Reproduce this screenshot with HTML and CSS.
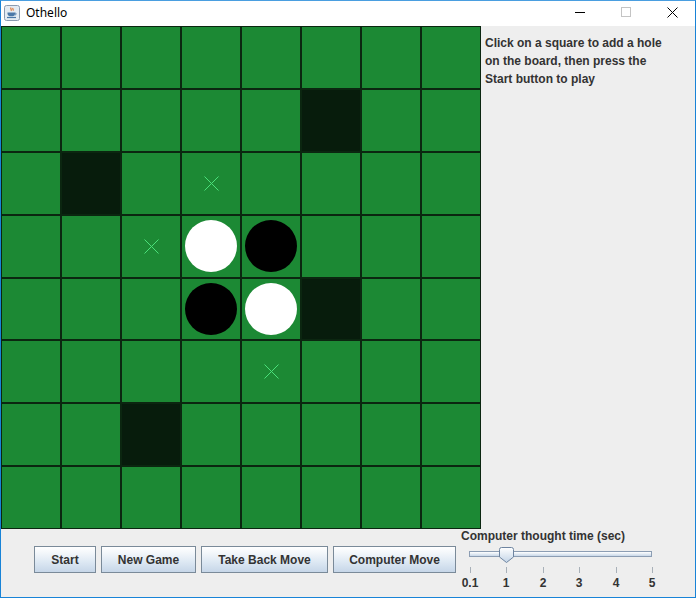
FILE: index.html
```html
<!DOCTYPE html>
<html>
<head>
<meta charset="utf-8">
<title>Othello</title>
<link rel="stylesheet" href="styles.css">
</head>
<body>
<div class="window">
  <div class="titlebar">
    <svg class="app-icon" width="16" height="16" viewBox="0 0 16 16">
      <rect x="0.5" y="0.5" width="15" height="15" rx="2" fill="#e4ebf2" stroke="#8a9bb0"/>
      <path d="M7 2.5c-1 1.2 1 2 0 3.3M9 3c-.8 1 .8 1.6 0 2.6" stroke="#e0702a" stroke-width="1.1" fill="none"/>
      <path d="M3.5 7.5h7.5v1.2c0 1.6-1.4 2.6-3.7 2.6S3.5 10.3 3.5 8.7z" fill="#4a78a8"/>
      <path d="M11 8c1.6 0 1.6 2-0.4 2" stroke="#4a78a8" fill="none"/>
      <path d="M3 12.5h9" stroke="#4a78a8" stroke-width="1.2"/>
    </svg>
    <span class="title">Othello</span>
    <div class="controls">
      <span class="ctl"><svg width="10" height="10" viewBox="0 0 10 10"><path d="M0 5.5h10" stroke="#000" stroke-width="1"/></svg></span>
      <span class="ctl"><svg width="10" height="10" viewBox="0 0 10 10"><rect x="0.5" y="0.5" width="9" height="9" fill="none" stroke="#c4c4c4"/></svg></span>
      <span class="ctl"><svg width="11" height="11" viewBox="0 0 11 11"><path d="M0.5 0.5l10 10M10.5 0.5l-10 10" stroke="#000" stroke-width="1"/></svg></span>
    </div>
  </div>
  <div class="content">
    <div class="board">
      <div class="cell"></div><div class="cell"></div><div class="cell"></div><div class="cell"></div><div class="cell"></div><div class="cell"></div><div class="cell"></div><div class="cell"></div>
      <div class="cell"></div><div class="cell"></div><div class="cell"></div><div class="cell"></div><div class="cell"></div><div class="cell hole"></div><div class="cell"></div><div class="cell"></div>
      <div class="cell"></div><div class="cell hole"></div><div class="cell"></div><div class="cell"><svg class="hint" width="15" height="15" viewBox="0 0 15 15"><path d="M0.5 0.5l14 14M14.5 0.5l-14 14" stroke="#4be07a" stroke-width="1"/></svg></div><div class="cell"></div><div class="cell"></div><div class="cell"></div><div class="cell"></div>
      <div class="cell"></div><div class="cell"></div><div class="cell"><svg class="hint" width="15" height="15" viewBox="0 0 15 15"><path d="M0.5 0.5l14 14M14.5 0.5l-14 14" stroke="#4be07a" stroke-width="1"/></svg></div><div class="cell"><span class="disc white"></span></div><div class="cell"><span class="disc black"></span></div><div class="cell"></div><div class="cell"></div><div class="cell"></div>
      <div class="cell"></div><div class="cell"></div><div class="cell"></div><div class="cell"><span class="disc black"></span></div><div class="cell"><span class="disc white"></span></div><div class="cell hole"></div><div class="cell"></div><div class="cell"></div>
      <div class="cell"></div><div class="cell"></div><div class="cell"></div><div class="cell"></div><div class="cell"><svg class="hint" width="15" height="15" viewBox="0 0 15 15"><path d="M0.5 0.5l14 14M14.5 0.5l-14 14" stroke="#4be07a" stroke-width="1"/></svg></div><div class="cell"></div><div class="cell"></div><div class="cell"></div>
      <div class="cell"></div><div class="cell"></div><div class="cell hole"></div><div class="cell"></div><div class="cell"></div><div class="cell"></div><div class="cell"></div><div class="cell"></div>
      <div class="cell"></div><div class="cell"></div><div class="cell"></div><div class="cell"></div><div class="cell"></div><div class="cell"></div><div class="cell"></div><div class="cell"></div>
    </div>
    <div class="side">
      <p class="info">Click on a square to add a hole<br>on the board, then press the<br>Start button to play</p>
    </div>
  </div>
  <div class="bottom">
    <div class="buttons">
      <button class="btn btn-start">Start</button>
      <button class="btn btn-new">New Game</button>
      <button class="btn btn-back">Take Back Move</button>
      <button class="btn btn-comp">Computer Move</button>
    </div>
    <div class="slider-box">
      <div class="slider-label">Computer thought time (sec)</div>
      <div class="slider">
        <div class="track"></div>
        <svg class="thumb" width="15" height="16" viewBox="0 0 15 16">
          <defs><linearGradient id="tg" x1="0" y1="0" x2="0" y2="1"><stop offset="0" stop-color="#ffffff"/><stop offset="1" stop-color="#c3d4e7"/></linearGradient></defs>
          <path d="M2.5 0.5h10a2 2 0 0 1 2 2v7.5l-7 5.5l-7-5.5v-7.5a2 2 0 0 1 2-2z" fill="url(#tg)" stroke="#6e84a0"/>
        </svg>
        <span class="tick t0"></span><span class="tick t1"></span><span class="tick t2"></span><span class="tick t3"></span><span class="tick t4"></span><span class="tick t5"></span>
        <span class="tlabel t0">0.1</span><span class="tlabel t1">1</span><span class="tlabel t2">2</span><span class="tlabel t3">3</span><span class="tlabel t4">4</span><span class="tlabel t5">5</span>
      </div>
    </div>
  </div>
</div>
</body>
</html>
```

FILE: styles.css
```css
html, body {
  margin: 0;
  padding: 0;
  background: #eeeeee;
}
.window {
  width: 696px;
  height: 598px;
  box-sizing: border-box;
  border: 1px solid #1883d7;
  border-top-color: #4a9ee0;
  display: flex;
  flex-direction: column;
  background: #eeeeee;
  font-family: "Liberation Sans", Arial, sans-serif;
  font-weight: bold;
  font-size: 12px;
  color: #333333;
}
.titlebar {
  height: 25px;
  background: #ffffff;
  display: flex;
  align-items: center;
  flex: none;
}
.app-icon {
  margin-left: 3px;
  margin-top: -1px;
}
.title {
  margin-left: 6px;
  font-family: "Noto Sans", "Open Sans", sans-serif;
  font-weight: normal;
  font-size: 12px;
  color: #000000;
  margin-top: -2px;
}
.controls {
  margin-left: auto;
  display: flex;
  height: 25px;
}
.ctl {
  width: 46px;
  display: flex;
  align-items: center;
  justify-content: center;
  margin-top: -3px;
}
.content {
  display: flex;
  height: 503px;
  flex: none;
}
.board {
  width: 480px;
  height: 503px;
  display: grid;
  grid-template-columns: repeat(8, 60px);
  grid-template-rows: repeat(8, 1fr);
  flex: none;
}
.cell {
  background: #1c8934;
  border: 1px solid #0b2610;
  display: flex;
  align-items: center;
  justify-content: center;
}
.cell.hole {
  background: #071c0c;
}
.disc {
  width: 52px;
  height: 52px;
  border-radius: 50%;
}
.disc.white { background: #ffffff; }
.disc.black { background: #000000; }
.side {
  flex: 1;
  padding: 8px 0 0 4px;
}
.info {
  margin: 0;
  line-height: 18px;
  color: #333333;
}
.bottom {
  flex: 1;
  display: flex;
  align-items: flex-start;
}
.buttons {
  display: flex;
  gap: 5px;
  padding: 17px 0 0 33px;
}
.btn {
  height: 27px;
  padding: 0;
  border: 1px solid #7a8a99;
  border-radius: 0;
  background: linear-gradient(#ffffff 0%, #f2f6fa 25%, #dde8f3 60%, #c6d6e8 100%);
  font-family: "Liberation Sans", Arial, sans-serif;
  font-weight: bold;
  font-size: 12px;
  color: #333333;
  margin: 0;
  white-space: nowrap;
}
.btn-start { width: 62px; }
.btn-new { width: 95px; }
.btn-back { width: 127px; }
.btn-comp { width: 123px; }
.slider-box {
  margin-left: 5px;
  width: 200px;
}
.slider-label {
  line-height: 14px;
  white-space: nowrap;
}
.slider {
  position: relative;
  height: 54px;
}
.track {
  position: absolute;
  left: 8px;
  top: 8px;
  width: 181px;
  height: 4px;
  border: 1px solid #8c9db3;
  background: linear-gradient(#ffffff, #c8d7e8);
}
.thumb {
  position: absolute;
  left: 38px;
  top: 4px;
}
.tick {
  position: absolute;
  top: 24px;
  width: 1px;
  height: 6px;
  background: #a8b0b8;
}
.tick.t0 { left: 9px; }
.tick.t1 { left: 45px; }
.tick.t2 { left: 82px; }
.tick.t3 { left: 118px; }
.tick.t4 { left: 155px; }
.tick.t5 { left: 191px; }
.tlabel {
  position: absolute;
  top: 33px;
  width: 30px;
  text-align: center;
  line-height: 14px;
}
.tlabel.t0 { left: -6px; }
.tlabel.t1 { left: 30px; }
.tlabel.t2 { left: 67px; }
.tlabel.t3 { left: 103px; }
.tlabel.t4 { left: 140px; }
.tlabel.t5 { left: 176px; }
```
